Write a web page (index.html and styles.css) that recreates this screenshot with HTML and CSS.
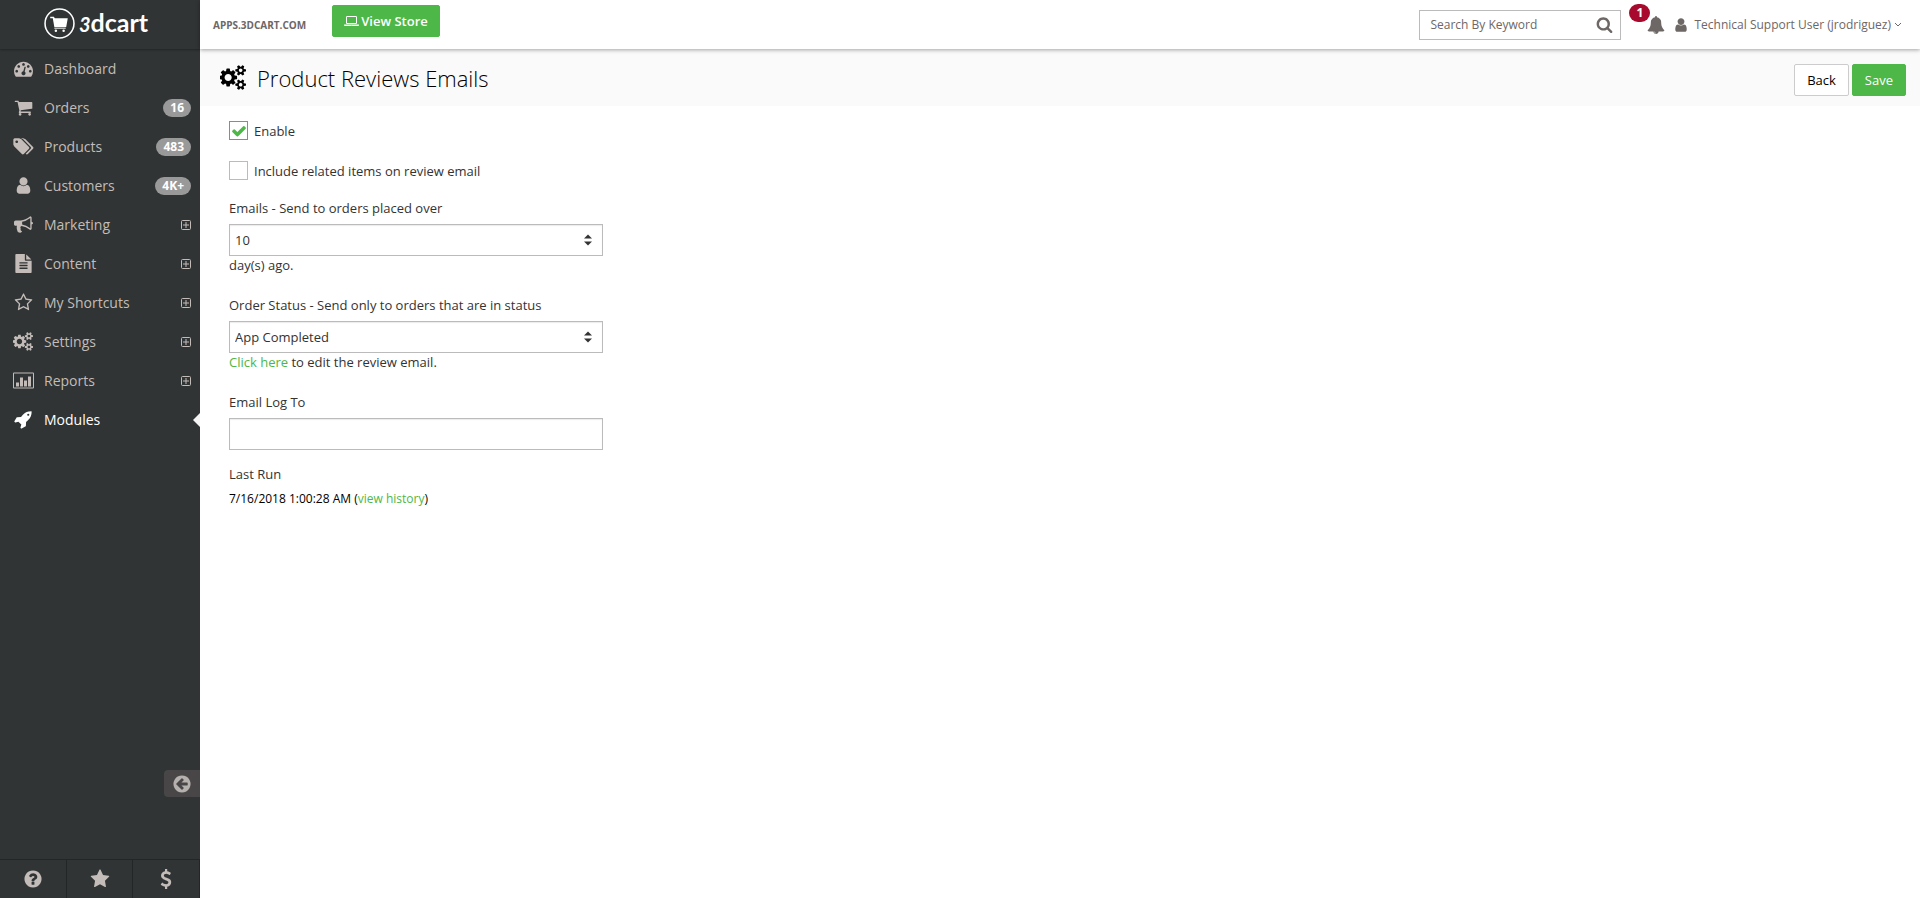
FILE: index.html
```html
<!DOCTYPE html>
<html lang="en">
<head>
  <meta charset="UTF-8">
  <meta name="viewport" content="width=device-width, initial-scale=1">
  <title>Product Reviews Emails</title>
  <link rel="stylesheet" href="styles.css">
</head>
<body>
  <!-- Icons -->
  <svg xmlns="http://www.w3.org/2000/svg" style="display: none;">
    <symbol id="dashboard" viewBox="0 0 1792 1792">
      <path d="M384 1152q0-53-37.500-90.500t-90.500-37.500-90.500 37.500-37.500 90.500 37.500 90.500 90.500 37.500 90.500-37.500 37.500-90.500zm192-448q0-53-37.500-90.500t-90.500-37.500-90.500 37.500-37.500 90.500 37.500 90.500 90.500 37.500 90.500-37.500 37.500-90.500zm428 481l101-382q6-26-7.500-48.500t-38.500-29.500-48 6.500-30 39.500l-101 382q-60 5-107 43.500t-63 98.500q-20 77 20 146t117 89 146-20 89-117q16-60-6-117t-72-91zm660-33q0-53-37.500-90.500t-90.500-37.500-90.500 37.500-37.500 90.500 37.500 90.500 90.500 37.500 90.500-37.500 37.500-90.500zm-640-640q0-53-37.500-90.500t-90.500-37.500-90.500 37.500-37.500 90.500 37.500 90.500 90.500 37.500 90.500-37.500 37.500-90.500zm448 192q0-53-37.500-90.500t-90.500-37.500-90.500 37.500-37.500 90.500 37.500 90.500 90.500 37.500 90.500-37.500 37.500-90.500zm320 448q0 261-141 483-19 29-54 29h-1402q-35 0-54-29-141-221-141-483 0-182 71-348t191-286 286-191 348-71 348 71 286 191 191 286 71 348z"/>
    </symbol>
    <symbol id="cart" viewBox="0 0 1792 1792">
      <path d="M704 1536q0 52-38 90t-90 38-90-38-38-90 38-90 90-38 90 38 38 90zm896 0q0 52-38 90t-90 38-90-38-38-90 38-90 90-38 90 38 38 90zm128-1088v512q0 24-16.500 42.500t-40.500 21.500l-1044 122q13 60 13 70 0 16-24 64h920q26 0 45 19t19 45-19 45-45 19h-1024q-26 0-45-19t-19-45q0-11 8-31.500t16-36 21.500-40 15.500-29.500l-177-823h-204q-26 0-45-19t-19-45 19-45 45-19h256q16 0 28.500 6.500t19.500 15.500 13 24.500 8 26 5.500 29.500 4.500 26h1201q26 0 45 19t19 45z"/>
    </symbol>
    <symbol id="tags" viewBox="0 0 1920 1792">
      <path d="M448 448q0-53-37.500-90.500t-90.500-37.500-90.500 37.500-37.500 90.500 37.500 90.500 90.500 37.500 90.500-37.500 37.500-90.500zm1067 576q0 53-37 90l-491 492q-39 37-91 37-53 0-90-37l-715-716q-38-37-64.500-101t-26.500-117v-416q0-52 38-90t90-38h416q53 0 117 26.500t102 64.500l715 714q37 39 37 91zm384 0q0 53-37 90l-491 492q-39 37-91 37-36 0-59-14t-53-45l470-470q37-37 37-90 0-52-37-91l-715-714q-38-38-102-64.500t-117-26.500h224q53 0 117 26.500t102 64.500l715 714q37 39 37 91z"/>
    </symbol>
    <symbol id="user" viewBox="0 0 1792 1792">
      <path d="M1536 1399q0 109-62.500 187t-150.500 78h-854q-88 0-150.500-78t-62.500-187q0-85 8.500-160.500t31.500-152 58.500-131 94-89 134.500-34.500q131 128 313 128t313-128q76 0 134.500 34.500t94 89 58.500 131 31.500 152 8.500 160.500zm-256-887q0 159-112.500 271.500t-271.500 112.500-271.500-112.500-112.500-271.500 112.500-271.500 271.500-112.500 271.500 112.500 112.500 271.500z"/>
    </symbol>
    <symbol id="bullhorn" viewBox="0 0 1792 1792">
      <path d="M1664 640q53 0 90.500 37.500t37.500 90.500-37.500 90.500-90.500 37.500v384q0 52-38 90t-90 38q-417-347-812-380-58 19-91 66t-31 100.500 40 92.500q-20 33-23 65.500t6 58 33.500 55 48 50 61.500 50.500q-29 58-111.500 83t-168.500 11.500-132-55.500q-7-23-29.500-87.500t-32-94.500-23-89-15-101 3.500-98.500 22-110.500h-122q-66 0-113-47t-47-113v-192q0-66 47-113t113-47h480q435 0 896-384 52 0 90 38t38 90v384zm-128 604v-954q-394 302-768 343v270q377 42 768 341z"/>
    </symbol>
    <symbol id="file" viewBox="0 0 1792 1792">
      <path d="M1596 476q14 14 28 36h-472v-472q22 14 36 28zm-476 164h544v1056q0 40-28 68t-68 28h-1344q-40 0-68-28t-28-68v-1600q0-40 28-68t68-28h800v544q0 40 28 68t68 28zm160 736v-64q0-14-9-23t-23-9h-704q-14 0-23 9t-9 23v64q0 14 9 23t23 9h704q14 0 23-9t9-23zm0-256v-64q0-14-9-23t-23-9h-704q-14 0-23 9t-9 23v64q0 14 9 23t23 9h704q14 0 23-9t9-23zm0-256v-64q0-14-9-23t-23-9h-704q-14 0-23 9t-9 23v64q0 14 9 23t23 9h704q14 0 23-9t9-23z"/>
    </symbol>
    <symbol id="star-o" viewBox="0 0 1792 1792">
      <path d="M1201 1004l306-297-422-62-189-382-189 382-422 62 306 297-73 421 378-199 377 199zm527-357q0 22-26 48l-363 354 86 500q1 7 1 20 0 50-41 50-19 0-40-12l-449-236-449 236q-22 12-40 12-21 0-31.500-14.500t-10.500-35.500q0-6 2-20l86-500-364-354q-25-27-25-48 0-37 56-46l502-73 225-455q19-41 49-41t49 41l225 455 502 73q56 9 56 46z"/>
    </symbol>
    <symbol id="cogs" viewBox="0 0 1920 1792">
      <path d="M832 896q0-106-75-181t-181-75-181 75-75 181 75 181 181 75 181-75 75-181zm768 512q0-52-38-90t-90-38-90 38-38 90q0 53 37.500 90.500t90.500 37.500 90.500-37.500 37.500-90.500zm0-1024q0-52-38-90t-90-38-90 38-38 90q0 53 37.500 90.500t90.500 37.500 90.500-37.500 37.500-90.500zm-384 421v185q0 10-7 19.500t-16 10.500l-155 24q-11 35-32 76 34 48 90 115 7 11 7 20 0 12-7 19-23 30-82.500 89.500t-78.500 59.500q-11 0-21-7l-115-90q-37 19-77 31-11 108-23 155-7 24-30 24h-186q-11 0-20-7.500t-10-17.500l-23-153q-34-10-75-31l-118 89q-7 7-20 7-11 0-21-8-144-133-144-160 0-9 7-19 10-14 41-53t47-61q-23-44-35-82l-152-24q-10-1-17-9.500t-7-19.500v-185q0-10 7-19.500t16-10.500l155-24q11-35 32-76-34-48-90-115-7-11-7-20 0-12 7-20 22-30 82-89t79-59q11 0 21 7l115 90q34-18 77-32 11-108 23-154 7-24 30-24h186q11 0 20 7.500t10 17.500l23 153q34 10 75 31l118-89q8-7 20-7 11 0 21 8 144 133 144 160 0 8-7 19-12 16-42 54t-45 60q23 48 34 82l152 23q10 2 17 10.500t7 19.500zm640 533v140q0 16-149 31-12 27-30 52 51 113 51 138 0 4-4 7-122 71-124 71-8 0-46-47t-52-68q-20 2-30 2t-30-2q-14 21-52 68t-46 47q-2 0-124-71-4-3-4-7 0-25 51-138-18-25-30-52-149-15-149-31v-140q0-16 149-31 13-29 30-52-51-113-51-138 0-4 4-7 4-2 35-20t59-34 30-16q8 0 46 46.500t52 67.500q20-2 30-2t30 2q51-71 92-112l6-2q4 0 124 70 4 3 4 7 0 25-51 138 17 23 30 52 149 15 149 31zm0-1024v140q0 16-149 31-12 27-30 52 51 113 51 138 0 4-4 7-122 71-124 71-8 0-46-47t-52-68q-20 2-30 2t-30-2q-14 21-52 68t-46 47q-2 0-124-71-4-3-4-7 0-25 51-138-18-25-30-52-149-15-149-31v-140q0-16 149-31 13-29 30-52-51-113-51-138 0-4 4-7 4-2 35-20t59-34 30-16q8 0 46 46.500t52 67.500q20-2 30-2t30 2q51-71 92-112l6-2q4 0 124 70 4 3 4 7 0 25-51 138 17 23 30 52 149 15 149 31z"/>
    </symbol>
    <symbol id="chart" viewBox="0 0 21 18">
      <path fill-rule="evenodd" d="M1 1h19a1 1 0 0 1 1 1v14a1 1 0 0 1-1 1H1a1 1 0 0 1-1-1V2a1 1 0 0 1 1-1zM1 2v14h19V2zM3 11h3v4H3zM7 6h3v9H7zM11 9h3v6h-3zM15 5h3v10h-3z"/>
    </symbol>
    <symbol id="rocket" viewBox="0 0 1792 1792">
      <path d="M1440 448q0-40-28-68t-68-28-68 28-28 68 28 68 68 28 68-28 28-68zm224-288q0 249-75.500 430.500t-253.500 360.500q-81 80-195 176l-20 379q-2 16-16 26l-384 224q-7 4-16 4-12 0-23-9l-64-64q-13-14-8-32l85-276-281-281-276 85q-3 1-9 1-14 0-23-9l-64-64q-17-19-5-39l224-384q10-14 26-16l379-20q96-114 176-195 188-187 358-258t431-71q14 0 24 9.500t10 22.500z"/>
    </symbol>
    <symbol id="plus" viewBox="0 0 10 10">
      <path fill="none" stroke="currentColor" d="M1.500.5h7a1 1 0 0 1 1 1v7a1 1 0 0 1-1 1h-7a1 1 0 0 1-1-1v-7a1 1 0 0 1 1-1zM2 5h6M5 2v6"/>
    </symbol>
    <symbol id="arrow-left" viewBox="0 0 1792 1792">
      <path d="M1408 960v-128q0-26-19-45t-45-19h-502l189-189q19-19 19-45t-19-45l-91-91q-18-18-45-18t-45 18l-362 362-91 91q-18 18-18 45t18 45l91 91 362 362q18 18 45 18t45-18l91-91q18-18 18-45t-18-45l-189-189h502q26 0 45-19t19-45zm256-64q0 209-103 385.500t-279.500 279.500-385.500 103-385.500-103-279.500-279.500-103-385.500 103-385.500 279.500-279.500 385.500-103 385.500 103 279.500 279.500 103 385.500z"/>
    </symbol>
    <symbol id="question" viewBox="0 0 1792 1792">
      <path d="M1024 1376v-192q0-14-9-23t-23-9h-192q-14 0-23 9t-9 23v192q0 14 9 23t23 9h192q14 0 23-9t9-23zm256-672q0-88-55.500-163t-138.500-116-170-41q-243 0-371 213-15 24 8 42l132 100q7 6 19 6 16 0 25-12 53-68 86-92 34-24 86-24 48 0 85.500 26t37.500 59q0 38-20 61t-68 45q-63 28-115.500 86.500t-52.500 125.500v36q0 14 9 23t23 9h192q14 0 23-9t9-23q0-19 21.500-49.500t54.500-49.500q32-18 49-28.500t46-35 44.500-48 28-60.500 12.500-81zm384 192q0 209-103 385.500t-279.500 279.500-385.500 103-385.500-103-279.500-279.500-103-385.500 103-385.500 279.500-279.500 385.500-103 385.500 103 279.500 279.500 103 385.500z"/>
    </symbol>
    <symbol id="star" viewBox="0 0 1792 1792">
      <path d="M1728 647q0 22-26 48l-363 354 86 500q1 7 1 20 0 21-10.500 35.500t-30.500 14.500q-19 0-40-12l-449-236-449 236q-22 12-40 12-21 0-31.500-14.500t-10.500-35.500q0-6 2-20l86-500-364-354q-25-27-25-48 0-37 56-46l502-73 225-455q19-41 49-41t49 41l225 455 502 73q56 9 56 46z"/>
    </symbol>
    <symbol id="dollar" viewBox="0 0 1792 1792">
      <path d="M1362 1185q0 153-99.500 263.500t-258.500 136.500v175q0 14-9 23t-23 9h-135q-13 0-22.500-9.500t-9.500-22.500v-175q-66-9-127.500-31t-101.500-44.500-74-48-46.500-37.500-17.500-18q-17-21-2-41l103-135q7-10 23-12 15-2 24 9l2 2q113 99 243 125 37 8 74 8 81 0 142.500-43t61.500-122q0-28-15-53t-33.500-42-58.500-37.500-66-32-80-32.500q-39-16-61.500-25t-61.500-26.500-62.500-31-56.500-35.500-53.500-42.500-43.500-49-35.500-58-21-66.500-8.500-78q0-138 98-242t255-134v-180q0-13 9.500-22.500t22.500-9.500h135q14 0 23 9t9 23v176q57 6 110.500 23t87 33.500 63.500 37.500 39 29 15 14q17 18 5 38l-81 146q-8 15-23 16-14 3-27-7-3-3-14.500-12t-39-26.500-58.500-32-74.500-26-85.500-11.500q-95 0-155 43t-60 111q0 26 8.500 48t29.500 41.500 39.500 33 56 31 60.500 27 70 27.500q53 20 81 31.500t76 35 75.500 42.500 62 50 53 63.500 31.500 76.500 13 94z"/>
    </symbol>
    <symbol id="laptop" viewBox="0 0 1920 1792">
      <path d="M416 1280q-66 0-113-47t-47-113v-704q0-66 47-113t113-47h1088q66 0 113 47t47 113v704q0 66-47 113t-113 47h-1088zm-32-864v704q0 13 9.500 22.500t22.500 9.500h1088q13 0 22.500-9.500t9.500-22.500v-704q0-13-9.500-22.500t-22.500-9.500h-1088q-13 0-22.500 9.500t-9.500 22.500zm1376 928h160v96q0 40-47 68t-113 28h-1600q-66 0-113-28t-47-68v-96h1760zm-720 96q16 0 16-16t-16-16h-160q-16 0-16 16t16 16h160z"/>
    </symbol>
    <symbol id="search" viewBox="0 0 1792 1792">
      <path d="M1216 832q0-185-131.500-316.500t-316.500-131.500-316.500 131.500-131.500 316.500 131.500 316.500 316.500 131.500 316.500-131.500 131.500-316.500zm512 832q0 52-38 90t-90 38q-54 0-90-38l-343-342q-179 124-399 124-143 0-273.500-55.500t-225-150-150-225-55.500-273.500 55.500-273.500 150-225 225-150 273.500-55.500 273.500 55.500 225 150 150 225 55.500 273.500q0 220-124 399l343 343q37 37 37 90z"/>
    </symbol>
    <symbol id="bell" viewBox="0 0 1792 1792">
      <path d="M912 1696q0-16-16-16-59 0-101.500-42.500t-42.500-101.500q0-16-16-16t-16 16q0 73 51.500 124.500t124.500 51.500q16 0 16-16zm816-288q0 52-38 90t-90 38h-448q0 106-75 181t-181 75-181-75-75-181h-448q-52 0-90-38t-38-90q50-42 91-88t85-119.500 74.500-158.500 50-206 19.500-260q0-152 117-282.500t307-158.500q-8-19-8-39 0-40 28-68t68-28 68 28 28 68q0 20-8 39 190 28 307 158.500t117 282.500q0 139 19.500 260t50 206 74.500 158.500 85 119.500 91 88z"/>
    </symbol>
    <symbol id="angle-down" viewBox="0 0 8 6">
      <path fill="none" stroke="currentColor" d="M1 1l3 3 3-3"/>
    </symbol>
    <symbol id="check" viewBox="0 0 1792 1792">
      <path d="M1671 566q0 40-28 68l-724 724-136 136q-28 28-68 28t-68-28l-136-136-362-362q-28-28-28-68t28-68l136-136q28-28 68-28t68 28l294 295 656-657q28-28 68-28t68 28l136 136q28 28 28 68z"/>
    </symbol>
    <symbol id="sort" viewBox="0 0 8 12">
      <path d="M0 4.500L4 .5l4 4zM0 7.500h8l-4 4z"/>
    </symbol>
    <symbol id="logo" viewBox="0 0 30 30">
      <circle cx="15" cy="15" r="14" fill="none" stroke="currentColor" stroke-width="1.500"/>
      <path d="M6 8.500h3.500l1 1.500H23l-1.500 8.500H10L8.500 10H6z"/>
      <path d="M10 19.500h11" fill="none" stroke="currentColor"/>
      <circle cx="11.500" cy="22" r="1.200"/>
      <circle cx="19" cy="22" r="1.200"/>
    </symbol>
  </svg>

  <!-- Sidebar -->
  <aside class="sidebar">
    <a href="#" class="logo">
      <svg class="logo-mark"><use href="#logo" /></svg>
      <span class="logo-text"><i>3</i>dcart</span>
    </a>
    <nav class="menu">
      <a href="#" class="menu-item"><svg class="menu-icon"><use href="#dashboard" /></svg><span>Dashboard</span></a>
      <a href="#" class="menu-item"><svg class="menu-icon"><use href="#cart" /></svg><span>Orders</span><b class="count">16</b></a>
      <a href="#" class="menu-item"><svg class="menu-icon"><use href="#tags" /></svg><span>Products</span><b class="count">483</b></a>
      <a href="#" class="menu-item"><svg class="menu-icon"><use href="#user" /></svg><span>Customers</span><b class="count">4K+</b></a>
      <a href="#" class="menu-item"><svg class="menu-icon"><use href="#bullhorn" /></svg><span>Marketing</span><svg class="expand"><use href="#plus" /></svg></a>
      <a href="#" class="menu-item"><svg class="menu-icon"><use href="#file" /></svg><span>Content</span><svg class="expand"><use href="#plus" /></svg></a>
      <a href="#" class="menu-item"><svg class="menu-icon"><use href="#star-o" /></svg><span>My Shortcuts</span><svg class="expand"><use href="#plus" /></svg></a>
      <a href="#" class="menu-item"><svg class="menu-icon"><use href="#cogs" /></svg><span>Settings</span><svg class="expand"><use href="#plus" /></svg></a>
      <a href="#" class="menu-item"><svg class="menu-icon"><use href="#chart" /></svg><span>Reports</span><svg class="expand"><use href="#plus" /></svg></a>
      <a href="#" class="menu-item active"><svg class="menu-icon"><use href="#rocket" /></svg><span>Modules</span></a>
    </nav>
    <button type="button" class="collapse" aria-label="Collapse menu"><svg><use href="#arrow-left" /></svg></button>
    <div class="shortcuts">
      <a href="#" aria-label="Help"><svg><use href="#question" /></svg></a>
      <a href="#" aria-label="Favorites"><svg><use href="#star" /></svg></a>
      <a href="#" aria-label="Billing"><svg><use href="#dollar" /></svg></a>
    </div>
  </aside>

  <div class="page">
    <!-- Top bar -->
    <header class="topbar">
      <span class="store-name">APPS.3DCART.COM</span>
      <button type="button" class="btn btn-green view-store"><svg><use href="#laptop" /></svg>View Store</button>
      <form class="search">
        <input type="text" placeholder="Search By Keyword" aria-label="Search By Keyword">
        <button type="button" aria-label="Search"><svg><use href="#search" /></svg></button>
      </form>
      <a href="#" class="alerts" aria-label="Notifications"><svg><use href="#bell" /></svg><b class="alert-count">1</b></a>
      <a href="#" class="account">
        <svg class="account-icon"><use href="#user" /></svg>
        <span>Technical Support User (jrodriguez)</span>
        <svg class="account-arrow"><use href="#angle-down" /></svg>
      </a>
    </header>

    <!-- Title -->
    <div class="title-bar">
      <svg class="title-icon"><use href="#cogs" /></svg>
      <h1>Product Reviews Emails</h1>
      <div class="actions">
        <button type="button" class="btn btn-white">Back</button>
        <button type="submit" form="settings" class="btn btn-green">Save</button>
      </div>
    </div>

    <!-- Settings -->
    <form class="settings" id="settings">
      <label class="check-row">
        <input type="checkbox" checked>
        <svg class="check-mark"><use href="#check" /></svg>
        <span>Enable</span>
      </label>
      <label class="check-row">
        <input type="checkbox">
        <svg class="check-mark"><use href="#check" /></svg>
        <span>Include related items on review email</span>
      </label>

      <div class="field">
        <label for="days">Emails - Send to orders placed over</label>
        <div class="select">
          <select id="days"><option>10</option></select>
          <svg><use href="#sort" /></svg>
        </div>
        <p>day(s) ago.</p>
      </div>

      <div class="field">
        <label for="status">Order Status - Send only to orders that are in status</label>
        <div class="select">
          <select id="status"><option>App Completed</option></select>
          <svg><use href="#sort" /></svg>
        </div>
        <p><a href="#">Click here</a> to edit the review email.</p>
      </div>

      <div class="field field-log">
        <label for="log">Email Log To</label>
        <input type="text" id="log">
      </div>

      <div class="last-run">
        <h2>Last Run</h2>
        <p>7/16/2018 1:00:28 AM (<a href="#">view history</a>)</p>
      </div>
    </form>
  </div>
</body>
</html>
```
FILE: styles.css
```css
*, *:before,
*:after {
  box-sizing: border-box;
}

body {
  margin: 0;
  display: flex;
  min-height: 100vh;
  background: #fff;
  color: #333;
  font: 400 13px/18px 'Open Sans', sans-serif;
}

a {
  color: #4db748;
  text-decoration: none;
}

p, h1, h2 {
  margin: 0;
}

svg {
  flex: none;
  fill: currentColor;
}

button,
input,
select {
  font: inherit;
  color: inherit;
}

button {
  cursor: pointer;
}

/* Sidebar */
.sidebar {
  flex: none;
  display: flex;
  flex-direction: column;
  width: 200px;
  background: #303434;
}

.logo {
  display: flex;
  align-items: center;
  gap: 4px;
  height: 49px;
  padding: 0 0 3px 44px;
  color: #fff;
  box-shadow: 0 1px 2px rgba(0, 0, 0, .3);
}

.logo-mark {
  width: 31px;
  height: 31px;
}

.logo-text {
  font: 700 25px/30px Lato, sans-serif;
}

.logo-text i {
  font-size: 20px;
}

.menu-item {
  position: relative;
  display: flex;
  align-items: center;
  height: 39px;
  padding: 0 9px 0 13px;
  color: #c3bcb8;
  font-size: 14px;
}

.menu-icon {
  width: 21px;
  height: 19px;
  margin-right: 10px;
}

.menu-item.active {
  color: #fff;
}

.menu-item.active:after {
  content: '';
  position: absolute;
  right: 0;
  border: 7px solid transparent;
  border-left: 0;
  border-right-color: #f5f5f5;
}

.count {
  margin-left: auto;
  padding: 0 7px;
  border-radius: 9px;
  background: #999;
  color: #fff;
  font-size: 12px;
  line-height: 18px;
}

.expand {
  width: 10px;
  height: 10px;
  margin-left: auto;
}

.collapse {
  display: flex;
  align-items: center;
  align-self: flex-end;
  width: 36px;
  height: 27px;
  margin: auto 0 62px;
  padding: 0 8px;
  border: 0;
  border-radius: 4px 0 0 4px;
  background: #484646;
  color: #b5b1af;
}

.collapse svg {
  width: 20px;
  height: 20px;
}

.shortcuts {
  display: flex;
  height: 39px;
  border-top: 1px solid #222626;
}

.shortcuts a {
  flex: 1;
  display: flex;
  align-items: center;
  justify-content: center;
  border-right: 1px solid #222626;
  color: #c3bcb8;
}

.shortcuts svg {
  width: 20px;
  height: 20px;
}

/* Top bar */
.page {
  flex: 1;
  min-width: 0;
}

.topbar {
  position: relative;
  display: flex;
  align-items: center;
  height: 49px;
  padding: 0 18px 0 13px;
  background: #fff;
  color: #6d6766;
  box-shadow: 0 1px 4px rgba(0, 0, 0, .35);
}

.store-name {
  font-size: 10px;
  font-weight: 700;
}

.btn {
  height: 32px;
  padding: 0 12px;
  border: 1px solid #4db748;
  border-radius: 2px;
}

.btn-green {
  background: #4db748;
  color: #fff;
}

.btn-white {
  border-color: #ccc;
  background: #fff;
}

.view-store {
  display: flex;
  align-items: center;
  gap: 2px;
  margin: 0 auto 8px 26px;
  padding: 0 11px;
  font-weight: 600;
}

.view-store svg {
  width: 15px;
  height: 14px;
}

.search {
  display: flex;
  width: 202px;
  height: 30px;
  border: 1px solid #bbb;
}

.search input {
  flex: 1;
  min-width: 0;
  padding: 0 10px;
  border: 0;
  background: none;
  font-size: 12px;
}

.search input::placeholder {
  color: #6d6766;
}

.search button {
  display: flex;
  align-items: center;
  padding: 0 7px;
  border: 0;
  background: none;
}

.search button svg {
  width: 17px;
  height: 17px;
}

.alerts {
  position: relative;
  display: flex;
  margin: 0 8px 0 26px;
  color: inherit;
}

.alerts svg {
  width: 18px;
  height: 18px;
}

.alert-count {
  position: absolute;
  top: -12px;
  left: -18px;
  width: 21px;
  border-radius: 9px;
  background: #a70a2d;
  color: #fff;
  font-size: 12px;
  line-height: 18px;
  text-align: center;
}

.account {
  display: flex;
  align-items: center;
  color: inherit;
  font-size: 12px;
}

.account-icon {
  width: 16px;
  height: 16px;
  margin-right: 5px;
}

.account-arrow {
  width: 8px;
  height: 6px;
  margin-left: 3px;
}

/* Title */
.title-bar {
  display: flex;
  align-items: center;
  height: 57px;
  padding: 0 14px 0 20px;
  background: #fafafa;
  color: #000;
}

.title-icon {
  width: 27px;
  height: 25px;
  margin-right: 10px;
}

.title-bar h1 {
  font-size: 22px;
  font-weight: 300;
  line-height: 32px;
}

.actions {
  display: flex;
  gap: 3px;
  margin: 5px 0 0 auto;
}

/* Settings */
.settings {
  max-width: 403px;
  padding: 15px 0 40px 29px;
}

.check-row {
  position: relative;
  display: flex;
  align-items: center;
  gap: 6px;
  margin-bottom: 21px;
}

.check-row input {
  appearance: none;
  width: 19px;
  height: 19px;
  margin: 0;
  border: 1px solid #bbb;
  background: #fff;
}

.check-row input:checked {
  border-color: #4db748;
}

.check-mark {
  position: absolute;
  left: 2px;
  width: 16px;
  height: 16px;
  color: #4db748;
  visibility: hidden;
}

input:checked + .check-mark {
  visibility: visible;
}

.check-row + .field {
  margin-top: -2px;
}

.field {
  margin-bottom: 22px;
}

.field label {
  display: block;
  margin-bottom: 7px;
}

.field input,
.field select {
  display: block;
  width: 100%;
  height: 32px;
  padding: 0 5px;
  border: 1px solid #bbb;
  border-radius: 0;
  background: #fff;
  box-shadow: inset 0 1px 1px rgba(0, 0, 0, .08);
  appearance: none;
}

.select {
  position: relative;
}

.select svg {
  position: absolute;
  top: 10px;
  right: 11px;
  width: 8px;
  height: 12px;
  pointer-events: none;
}

.field-log {
  margin-bottom: 15px;
}

.last-run h2 {
  margin-bottom: 7px;
  font-size: 13px;
  font-weight: 400;
  line-height: 18px;
}

.last-run p {
  color: #000;
  font-size: 12px;
}
```
